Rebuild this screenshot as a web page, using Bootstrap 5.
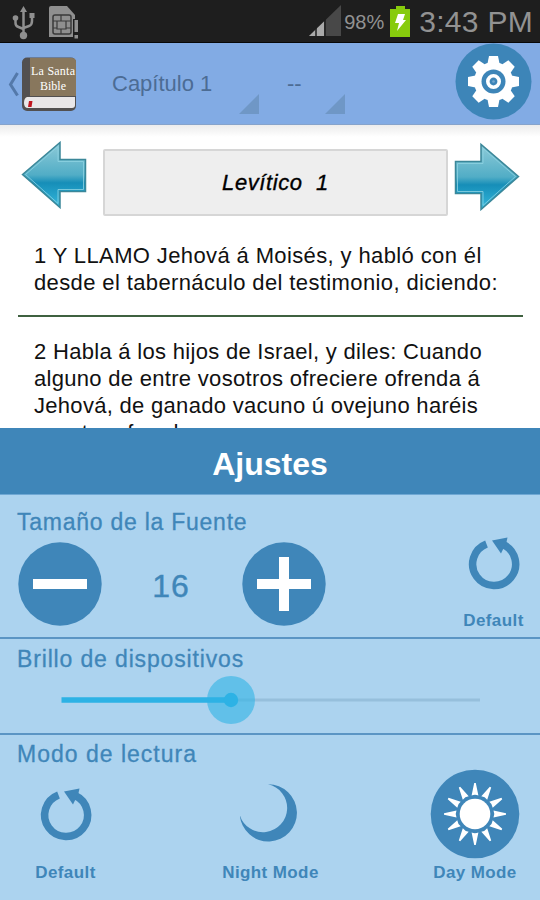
<!DOCTYPE html>
<html lang="es">
<head>
<meta charset="utf-8">
<meta name="viewport" content="width=device-width, initial-scale=1">
<title>La Santa Bible</title>
<link href="https://cdn.jsdelivr.net/npm/bootstrap@5.3.0/dist/css/bootstrap.min.css" rel="stylesheet">
<style>
  :root { --blue: #3f86b9; --sky: #acd3ef; }
  body { width: 540px; height: 900px; overflow: hidden; font-family: "Liberation Sans", Arial, sans-serif; background: #fff; white-space: nowrap; }
  svg { display: block; flex: none; }
  .status { height: 43px; background: #1e1e1e; border-bottom: 1px solid #080808; color: #929292; padding: 0 7px 0 12px; }
  .battery-pct { font-size: 20px; line-height: 43px; margin: 3px 5px 0 2px; }
  .clock { font-size: 30px; line-height: 43px; margin: 0 0 0 8px; letter-spacing: .3px; }
  .appbar { height: 82px; background: #82abe4; border-bottom: 1px solid #86a3cb; padding-left: 7px; }
  .spinner-box { height: 61px; font-size: 22px; color: #4c6c94; }
  .spinner-chapter { width: 147px; margin-left: 35px; }
  .spinner-verse { width: 58px; margin-left: 28px; }
  .spinner-box span { line-height: 62px; }
  .gear-btn { margin: 0 8px 4px auto; }
  .reader { height: 303px; background: linear-gradient(#ececec, #fff 12px); }
  .chapter-nav { padding: 16px 20px 0 21px; height: 92px; }
  .chapter-title { width: 345px; height: 67px; margin: 8px 0 0 16px; background: #eee; border: 2px solid #d6d6d6; border-radius: 2px; font-size: 22px; letter-spacing: .6px; color: #000; -webkit-text-stroke: .35px #000; white-space: pre; }
  .verse { font-size: 22px; line-height: 27px; color: #111; padding-left: 34px; }
  .verse-first { padding-top: 25px; height: 98px; letter-spacing: .38px; }
  .verse-rule { height: 2px; background: #3f6140; margin: 0 17px 0 18px; }
  .verse-next { padding-top: 21px; letter-spacing: .3px; }
  .panel-title { height: 67px; background: var(--blue); border-bottom: 1px solid #6fa8d4; color: #fff; font-size: 32px; font-weight: 700; line-height: 72px; }
  .setting { background: var(--sky); color: var(--blue); }
  .setting + .setting { border-top: 2px solid #5b95c4; }
  .setting-label { font-size: 23px; line-height: 28px; padding-left: 17px; -webkit-text-stroke: .3px var(--blue); }
  .font-setting { height: 142px; padding-top: 13px; }
  .light-setting { height: 96px; padding-top: 6px; }
  .mode-setting { height: 167px; padding-top: 5px; }
  .font-value { width: 138px; margin-right: 2px; font-size: 32px; line-height: 84px; letter-spacing: 1px; padding-top: 4px; -webkit-text-stroke: .4px var(--blue); }
  .tile-name { font-size: 17px; font-weight: 700; line-height: 20px; letter-spacing: .4px; }
  .font-setting .tile-name { margin: auto 0 6px; }
  .mode-setting .tile-name { padding-top: 2px; }
</style>
</head>
<body>
<header class="status d-flex align-items-center">
  <svg width="66" height="42" viewBox="12 0 66 42" fill="#8f8f8f" stroke="#8f8f8f">
    <path d="M23.500 11v23M15.500 18v5q0 3 3 4l5 2M32 17v4q0 4-3 5l-5.500 2" fill="none" stroke-width="2.500"/>
    <path d="M23.500 6l3.500 6h-7zM29.500 13h5v5h-5z" stroke="none"/><circle cx="15.500" cy="18" r="2.800" stroke="none"/><circle cx="23.500" cy="35.500" r="3.700" stroke="none"/>
    <path d="M51 6h16l8 9v22H49V8q0-2 2-2z" stroke="none"/>
    <rect x="53" y="15" width="18" height="19" rx="2" fill="none" stroke="#3a3a3a" stroke-width="1.500"/>
    <path d="M57 21h9v8h-9zM61 15v6M61 29v5M53 21h4M53 28h4M66 21h5M66 28h5" fill="none" stroke="#3a3a3a" stroke-width="1.200"/>
    <path d="M73 19h6v20h-6z" fill="#1e1e1e" stroke="none"/><path d="M74.500 20H78v12h-3.500zM74.500 35H78v3.500h-3.500z" stroke="none"/>
  </svg>
  <svg class="ms-auto" width="34" height="42" viewBox="0 0 34 42">
    <path d="M1 36L33 5v31z" fill="#484848"/><path d="M1 36L16 21.500V36z" fill="#aaa"/><path d="M8 27v10M17 18v19" stroke="#1e1e1e" stroke-width="1.500"/>
  </svg>
  <span class="battery-pct">98%</span>
  <svg width="22" height="42" viewBox="0 0 22 42">
    <path d="M1 9h6V6h9v3h5v28H1z" fill="#87cb0d"/><path d="M9 14h7l-2 6h3L8 31l2-8H6z" fill="#fff"/>
  </svg>
  <span class="clock">3:43 PM</span>
</header>

<nav class="appbar d-flex align-items-center">
  <svg width="70" height="56" viewBox="7 56 70 56">
    <path d="M17.500 73l-7 11.500 7 11" fill="none" stroke="#5479aa" stroke-width="3"/>
    <rect x="22" y="57.500" width="54" height="53.500" rx="5" fill="#525050"/>
    <path d="M30 58h42q4 0 4 4v34H30z" fill="#88775d"/>
    <path d="M27 97h48v8q0 3-3 3H28q-4 0-4-5t3-6z" fill="#e9e7e8"/>
    <path d="M29 101h3.500l-1 6H28z" fill="#c0161f"/>
    <g fill="#fff" font-family="Liberation Serif, serif" font-size="12"><text x="31" y="75" textLength="44">La Santa</text><text x="40" y="90" textLength="26">Bible</text></g>
  </svg>
  <div class="spinner-box spinner-chapter d-flex justify-content-between"><span>Capítulo 1</span><svg class="align-self-end" width="20" height="20"><path d="M20 0v20H0z" fill="#6f97c6"/></svg></div>
  <div class="spinner-box spinner-verse d-flex justify-content-between"><span>--</span><svg class="align-self-end" width="20" height="20"><path d="M20 0v20H0z" fill="#6f97c6"/></svg></div>
  <svg class="gear-btn" width="77" height="77" viewBox="-38.500 -38.500 77 77">
    <circle r="38" fill="#3d85b8"/>
    <g fill="#fff"><circle r="19.500"/>
      <g id="cogs"><path id="cog" d="M-6-18l1.500-7.500h9L6-18z"/><use href="#cog" transform="rotate(45)"/><use href="#cog" transform="rotate(90)"/><use href="#cog" transform="rotate(135)"/></g>
      <use href="#cogs" transform="rotate(180)"/></g>
    <circle r="12" fill="#3d85b8"/><circle r="5.700" fill="none" stroke="#fff" stroke-width="3.600"/><circle r="1.300" fill="#75a8d0"/>
  </svg>
</nav>

<main class="reader overflow-hidden">
  <div class="chapter-nav d-flex">
    <svg width="66" height="68" viewBox="-.5 -.5 66 68">
      <defs><linearGradient id="glass" x2="0" y2="1"><stop offset="0" stop-color="#8fcbd8"/><stop offset=".5" stop-color="#51adc6"/><stop offset=".62" stop-color="#168eb8"/><stop offset="1" stop-color="#35b8dc"/></linearGradient></defs>
      <path id="arrow" d="M1 33L38.500 1v17H64v32H38.500v16z" fill="url(#glass)" stroke="#3b8799" stroke-width="1.500"/>
      <path d="M4 33L36.500 5v15H62v28H36.500v14z" fill="none" stroke="#8ed3e2" stroke-opacity=".8"/>
    </svg>
    <div class="chapter-title d-flex align-items-center justify-content-center fst-italic">Levítico  1</div>
    <svg class="ms-auto" width="66" height="70" viewBox="-.5 -2.500 66 70">
      <use href="#arrow" transform="matrix(-1 0 0 1 65 0)"/>
      <path d="M61 33L28.500 5v15H3v28h25.500v14z" fill="none" stroke="#8ed3e2" stroke-opacity=".8"/>
    </svg>
  </div>
  <div class="verse verse-first">1 Y LLAMO Jehová á Moisés, y habló con él<br>desde el tabernáculo del testimonio, diciendo:</div>
  <div class="verse-rule"></div>
  <div class="verse verse-next">2 Habla á los hijos de Israel, y diles: Cuando<br>alguno de entre vosotros ofreciere ofrenda á<br>Jehová, de ganado vacuno ú ovejuno haréis<br>vuestra ofrenda.</div>
</main>

<section>
  <div class="panel-title text-center">Ajustes</div>
  <div class="setting font-setting d-flex justify-content-between">
    <div>
      <div class="setting-label" style="letter-spacing:.75px">Tamaño de la Fuente</div>
      <div class="d-flex ps-3 pt-1">
        <svg width="86" height="86" viewBox="-44 -44 86 86"><circle r="41.700" fill="#3f86b9"/><path d="M-27 0h54" stroke="#fff" stroke-width="10"/></svg>
        <div class="font-value text-center">16</div>
        <svg width="84" height="86" viewBox="-42 -44 84 86"><circle r="41.700" fill="#3f86b9"/><path d="M-27 0h54M0-27v54" stroke="#fff" stroke-width="10"/></svg>
      </div>
    </div>
    <div class="d-flex flex-column align-items-center pt-4" style="width:93px">
      <svg class="mt-1" width="56" height="56" viewBox="-28 -28 56 56">
        <g id="reset"><path d="M-7.500-20A21.500 21.500 0 1 0 9-19.500" fill="none" stroke="#3f86b9" stroke-width="7.500"/><path d="M-2-23.500L13.500-26.500 12.500-22 7-10.500z" fill="#3f86b9"/></g>
      </svg>
      <div class="tile-name">Default</div>
    </div>
  </div>

  <div class="setting light-setting">
    <div class="setting-label" style="letter-spacing:.85px">Brillo de dispositivos</div>
    <svg width="540" height="56" viewBox="0 673 540 56">
      <path d="M231 700h249" stroke="#96bfdc" stroke-width="3"/>
      <circle cx="231" cy="700" r="24" fill="#33b5e5" fill-opacity=".62"/>
      <path d="M61.500 700H231" stroke="#2db2e5" stroke-width="5.500"/><circle cx="231" cy="700" r="7.200" fill="#2db2e5"/>
    </svg>
  </div>

  <div class="setting mode-setting">
    <div class="setting-label" style="letter-spacing:1px">Modo de lectura</div>
    <div class="d-flex justify-content-between text-center">
      <div class="d-flex flex-column align-items-center" style="width:131px">
        <svg width="60" height="93" viewBox="-30 -47 60 93"><use href="#reset"/></svg>
        <div class="tile-name">Default</div>
      </div>
      <div class="d-flex flex-column align-items-center">
        <svg width="60" height="93" viewBox="241 769 60 93"><path d="M269 785.300A28.600 28.600 0 1 1 240.800 816A24.200 24.200 0 1 0 269 785.300z" fill="#3f86b9"/></svg>
        <div class="tile-name">Night Mode</div>
      </div>
      <div class="d-flex flex-column align-items-center" style="width:130px">
        <svg width="90" height="93" viewBox="-45 -46 90 93">
          <circle r="44.300" fill="#3f86b9"/>
          <g fill="#fff"><circle r="15.300"/>
            <g id="rays"><path id="ray" d="M-3.400-18.500L-.8-31h1.600L3.400-18.500Q0-20 -3.400-18.500z"/><use href="#ray" transform="rotate(30)"/><use href="#ray" transform="rotate(60)"/></g>
            <use href="#rays" transform="rotate(90)"/><use href="#rays" transform="rotate(180)"/><use href="#rays" transform="rotate(270)"/></g>
        </svg>
        <div class="tile-name">Day Mode</div>
      </div>
    </div>
  </div>
</section>
<script src="https://cdn.jsdelivr.net/npm/bootstrap@5.3.0/dist/js/bootstrap.bundle.min.js"></script>
</body>
</html>
